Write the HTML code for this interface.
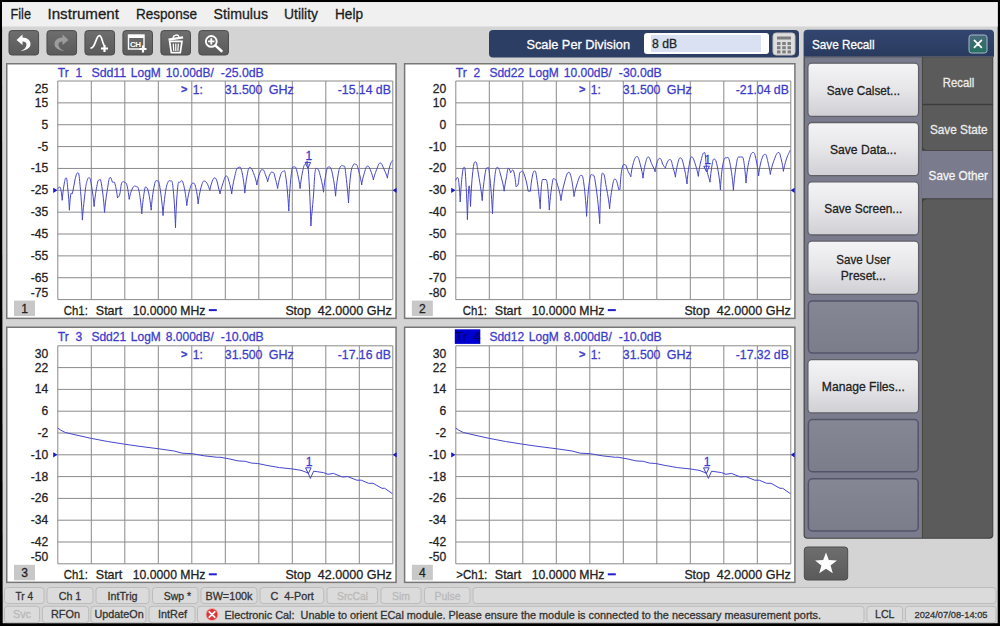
<!DOCTYPE html>
<html><head><meta charset="utf-8"><title>Network Analyzer</title>
<style>html,body{margin:0;padding:0;background:#000;width:1000px;height:626px;overflow:hidden}</style></head>
<body>
<svg width="1000" height="626" viewBox="0 0 1000 626" font-family='"Liberation Sans", Arial, sans-serif' style="position:absolute;left:0;top:0">
<style>text{white-space:pre}</style>
<defs>
<linearGradient id="gbtn" x1="0" y1="0" x2="0" y2="1"><stop offset="0" stop-color="#f4f4f6"/><stop offset="0.5" stop-color="#e6e6e9"/><stop offset="1" stop-color="#cfcfd4"/></linearGradient>
<linearGradient id="gtb" x1="0" y1="0" x2="0" y2="1"><stop offset="0" stop-color="#6e6e6e"/><stop offset="1" stop-color="#5a5a5a"/></linearGradient>
<linearGradient id="ghd" x1="0" y1="0" x2="0" y2="1"><stop offset="0" stop-color="#33466f"/><stop offset="1" stop-color="#293a5e"/></linearGradient>
<linearGradient id="gcl" x1="0" y1="0" x2="0" y2="1"><stop offset="0" stop-color="#4a6a7c"/><stop offset="1" stop-color="#24705f"/></linearGradient>
<linearGradient id="gin" x1="0" y1="0" x2="0" y2="1"><stop offset="0" stop-color="#868795"/><stop offset="1" stop-color="#7c7d8b"/></linearGradient>
</defs>
<rect x="0" y="0" width="1000" height="626" fill="#000" />
<rect x="1.9" y="2.1" width="995.8" height="621.1" fill="#d4d4d4" />
<rect x="1.9" y="2.1" width="995.8" height="24.4" fill="#f0f0f0" />
<path d="M0,0H2.0L2.7,626H0Z" fill="#000"/>
<text x="10.5" y="19" font-size="15" fill="#1c1c1c" stroke="#1c1c1c" stroke-width="0.3" textLength="20.5" lengthAdjust="spacingAndGlyphs" >File</text>
<text x="47.5" y="19" font-size="15" fill="#1c1c1c" stroke="#1c1c1c" stroke-width="0.3" textLength="71.5" lengthAdjust="spacingAndGlyphs" >Instrument</text>
<text x="136" y="19" font-size="15" fill="#1c1c1c" stroke="#1c1c1c" stroke-width="0.3" textLength="61" lengthAdjust="spacingAndGlyphs" >Response</text>
<text x="213.6" y="19" font-size="15" fill="#1c1c1c" stroke="#1c1c1c" stroke-width="0.3" textLength="54.4" lengthAdjust="spacingAndGlyphs" >Stimulus</text>
<text x="284" y="19" font-size="15" fill="#1c1c1c" stroke="#1c1c1c" stroke-width="0.3" textLength="34" lengthAdjust="spacingAndGlyphs" >Utility</text>
<text x="335" y="19" font-size="15" fill="#1c1c1c" stroke="#1c1c1c" stroke-width="0.3" textLength="28" lengthAdjust="spacingAndGlyphs" >Help</text>
<rect x="9.0" y="30.6" width="29.6" height="24.4" fill="url(#gtb)" rx="3" stroke="#4c4c4c" stroke-width="1" />
<rect x="46.97" y="30.6" width="29.6" height="24.4" fill="url(#gtb)" rx="3" stroke="#4c4c4c" stroke-width="1" />
<rect x="84.94" y="30.6" width="29.6" height="24.4" fill="url(#gtb)" rx="3" stroke="#4c4c4c" stroke-width="1" />
<rect x="122.91" y="30.6" width="29.6" height="24.4" fill="url(#gtb)" rx="3" stroke="#4c4c4c" stroke-width="1" />
<rect x="160.88" y="30.6" width="29.6" height="24.4" fill="url(#gtb)" rx="3" stroke="#4c4c4c" stroke-width="1" />
<rect x="198.85" y="30.6" width="29.6" height="24.4" fill="url(#gtb)" rx="3" stroke="#4c4c4c" stroke-width="1" />
<g transform="translate(23.5,43)" fill="#fff" stroke="none"><path d="M-7,-3 L-1,-8.5 L-1,-5.5 C4,-5.5 7,-2.5 7,1 C7,5 3,7.5 -3,8 C1,6.5 3,4 3,1.5 C3,-0.5 1.5,-1.5 -1,-1.5 L-1,2 Z"/></g>
<g transform="translate(61.5,43) scale(-1,1)" fill="#9c9c9c" stroke="none"><path d="M-7,-3 L-1,-8.5 L-1,-5.5 C4,-5.5 7,-2.5 7,1 C7,5 3,7.5 -3,8 C1,6.5 3,4 3,1.5 C3,-0.5 1.5,-1.5 -1,-1.5 L-1,2 Z"/></g>
<g transform="translate(99.5,43)" fill="none" stroke="#fff" stroke-width="1.7" stroke-linecap="round"><path d="M-8.5,5 C-4,5 -3.6,-7.4 -0.2,-7.4 C2.6,-7.4 2.6,-0.5 4.3,1.6"/><path d="M5,2 L5,9 M1.5,5.5 L8.5,5.5" stroke-width="2.2" stroke-linecap="butt"/></g>
<g transform="translate(137.5,43)"><rect x="-9" y="-8" width="15.5" height="14" fill="none" stroke="#fff" stroke-width="1.4"/><rect x="-9" y="-8" width="15.5" height="3" fill="#fff"/><text x="-7.5" y="3.5" font-size="8" font-weight="bold" fill="#fff" textLength="11">CH</text><path d="M5.5,2.5 L5.5,9.5 M2,6 L9,6" stroke="#fff" stroke-width="2.2"/></g>
<g transform="translate(175.8,43.6) scale(1.12)" fill="none" stroke="#fff"><path d="M-5.5,-2 L-4,8 L4,8 L5.5,-2 Z" stroke-width="1.5"/><path d="M-6.5,-3.5 L6.5,-5.5" stroke-width="2"/><path d="M-2.5,-5 C-2,-8 2,-8.5 2.8,-6" stroke-width="1.3"/><path d="M-2.3,0 L-1.8,6.5 M0,0 L0,6.5 M2.3,0 L1.8,6.5" stroke-width="1.1"/></g>
<g transform="translate(213.5,43)" fill="none" stroke="#fff"><circle cx="-2.2" cy="-1.6" r="5.4" stroke-width="1.9"/><path d="M2,2.6 L8,8" stroke-width="2.6" stroke-linecap="round"/><path d="M-2.2,-4.8 L-2.2,1.6 M-5.4,-1.6 L1,-1.6" stroke-width="1.9"/></g>
<rect x="489" y="30" width="310" height="27.6" fill="#2d3e65" rx="4" />
<text x="526.4" y="49" font-size="13.5" fill="#fff" stroke="#fff" stroke-width="0.3" textLength="103.6" lengthAdjust="spacingAndGlyphs" >Scale Per Division</text>
<rect x="644" y="33" width="125" height="21" fill="#fff" rx="3" />
<rect x="651" y="35" width="110" height="17" fill="#d9e1f2" />
<text x="652" y="48.2" font-size="13" fill="#222" stroke="#222" stroke-width="0.3" textLength="25" lengthAdjust="spacingAndGlyphs" >8 dB</text>
<rect x="773" y="33" width="22" height="22" fill="#dedede" rx="3" stroke="#bdbdbd" stroke-width="1" />
<g fill="#7e7e7e"><rect x="777" y="36.5" width="14" height="3"/><rect x="777.0" y="42.0" width="3.5" height="3"/><rect x="782.25" y="42.0" width="3.5" height="3"/><rect x="787.5" y="42.0" width="3.5" height="3"/><rect x="777.0" y="46.2" width="3.5" height="3"/><rect x="782.25" y="46.2" width="3.5" height="3"/><rect x="787.5" y="46.2" width="3.5" height="3"/><rect x="777.0" y="50.4" width="3.5" height="3"/><rect x="782.25" y="50.4" width="3.5" height="3"/><rect x="787.5" y="50.4" width="3.5" height="3"/></g>
<rect x="6" y="63" width="390.8" height="256.1" fill="#777" />
<rect x="7.5" y="64.5" width="387.8" height="253.10000000000002" fill="#fff" />
<path d="M57.80,81V299.6M57.8,81.00H392.8M91.30,81V299.6M57.8,102.86H392.8M124.80,81V299.6M57.8,124.72H392.8M158.30,81V299.6M57.8,146.58H392.8M191.80,81V299.6M57.8,168.44H392.8M225.30,81V299.6M57.8,190.30H392.8M258.80,81V299.6M57.8,212.16H392.8M292.30,81V299.6M57.8,234.02H392.8M325.80,81V299.6M57.8,255.88H392.8M359.30,81V299.6M57.8,277.74H392.8M392.80,81V299.6M57.8,299.60H392.8" stroke="#8a8a8a" stroke-width="1" fill="none"/>
<text x="48.3" y="92.7" font-size="13" fill="#222" stroke="#222" stroke-width="0.3" text-anchor="end" textLength="13.45" lengthAdjust="spacingAndGlyphs" >25</text>
<text x="48.3" y="106.9" font-size="13" fill="#222" stroke="#222" stroke-width="0.3" text-anchor="end" textLength="13.45" lengthAdjust="spacingAndGlyphs" >15</text>
<text x="48.3" y="128.7" font-size="13" fill="#222" stroke="#222" stroke-width="0.3" text-anchor="end" textLength="6.72" lengthAdjust="spacingAndGlyphs" >5</text>
<text x="48.3" y="150.6" font-size="13" fill="#222" stroke="#222" stroke-width="0.3" text-anchor="end" textLength="10.75" lengthAdjust="spacingAndGlyphs" >-5</text>
<text x="48.3" y="172.4" font-size="13" fill="#222" stroke="#222" stroke-width="0.3" text-anchor="end" textLength="17.47" lengthAdjust="spacingAndGlyphs" >-15</text>
<text x="48.3" y="194.3" font-size="13" fill="#222" stroke="#222" stroke-width="0.3" text-anchor="end" textLength="17.47" lengthAdjust="spacingAndGlyphs" >-25</text>
<text x="48.3" y="216.2" font-size="13" fill="#222" stroke="#222" stroke-width="0.3" text-anchor="end" textLength="17.47" lengthAdjust="spacingAndGlyphs" >-35</text>
<text x="48.3" y="238.0" font-size="13" fill="#222" stroke="#222" stroke-width="0.3" text-anchor="end" textLength="17.47" lengthAdjust="spacingAndGlyphs" >-45</text>
<text x="48.3" y="259.9" font-size="13" fill="#222" stroke="#222" stroke-width="0.3" text-anchor="end" textLength="17.47" lengthAdjust="spacingAndGlyphs" >-55</text>
<text x="48.3" y="281.7" font-size="13" fill="#222" stroke="#222" stroke-width="0.3" text-anchor="end" textLength="17.47" lengthAdjust="spacingAndGlyphs" >-65</text>
<text x="48.3" y="297.2" font-size="13" fill="#222" stroke="#222" stroke-width="0.3" text-anchor="end" textLength="17.47" lengthAdjust="spacingAndGlyphs" >-75</text>
<text x="57.8" y="77" font-size="13" fill="#3c3ccc" stroke="#3c3ccc" stroke-width="0.3" textLength="10.96" lengthAdjust="spacingAndGlyphs" >Tr</text>
<text x="75.6" y="77" font-size="13" fill="#3c3ccc" stroke="#3c3ccc" stroke-width="0.3" textLength="6.72" lengthAdjust="spacingAndGlyphs" >1</text>
<text x="91.39999999999999" y="77" font-size="13" fill="#3c3ccc" stroke="#3c3ccc" stroke-width="0.3" textLength="34.8" lengthAdjust="spacingAndGlyphs" >Sdd11</text>
<text x="130.8" y="77" font-size="13" fill="#3c3ccc" stroke="#3c3ccc" stroke-width="0.3" textLength="30" lengthAdjust="spacingAndGlyphs" >LogM</text>
<text x="165.8" y="77" font-size="13" fill="#3c3ccc" stroke="#3c3ccc" stroke-width="0.3" textLength="48" lengthAdjust="spacingAndGlyphs" >10.00dB/</text>
<text x="220.8" y="77" font-size="13" fill="#3c3ccc" stroke="#3c3ccc" stroke-width="0.3" textLength="43" lengthAdjust="spacingAndGlyphs" >-25.0dB</text>
<text x="181.10000000000002" y="93.4" font-size="11" fill="#3c3ccc" stroke="#3c3ccc" stroke-width="0.3" font-weight="bold">&gt;</text>
<text x="192.8" y="94" font-size="13" fill="#3c3ccc" stroke="#3c3ccc" stroke-width="0.3" textLength="10.08" lengthAdjust="spacingAndGlyphs" >1:</text>
<text x="224.8" y="94" font-size="13" fill="#3c3ccc" stroke="#3c3ccc" stroke-width="0.3" textLength="37.6" lengthAdjust="spacingAndGlyphs" >31.500</text>
<text x="268.8" y="94" font-size="13" fill="#3c3ccc" stroke="#3c3ccc" stroke-width="0.3" textLength="25" lengthAdjust="spacingAndGlyphs" >GHz</text>
<text x="390.8" y="94" font-size="13" fill="#3c3ccc" stroke="#3c3ccc" stroke-width="0.3" text-anchor="end" textLength="53" lengthAdjust="spacingAndGlyphs" >-15.14 dB</text>
<path d="M57.6,189.0C57.8,188.5 58.5,187.2 59.4,187.2C60.0,187.2 60.2,186.5 60.8,189.5C61.4,192.5 62.1,197.6 62.2,200.3C62.5,196.5 63.2,189.6 64.0,185.0C65.0,179.5 65.2,177.8 66.2,177.8C66.8,177.8 67.0,180.3 67.6,186.8C68.5,194.9 69.2,204.3 69.4,210.2C69.6,206.4 70.1,198.1 70.7,194.9C71.5,190.4 71.7,196.0 72.5,193.1C73.7,188.7 74.0,183.2 75.2,178.7C76.4,174.2 76.7,172.9 77.9,172.9C78.7,172.9 78.9,172.9 79.7,181.4C80.9,194.1 82.1,210.4 82.4,220.1C82.7,213.1 83.9,202.6 85.1,192.2C85.9,185.2 86.1,184.2 86.9,181.4C88.0,177.7 88.2,177.8 89.2,177.8C90.2,177.8 90.4,179.2 91.4,185.0C92.6,192.2 93.8,201.2 94.1,206.6C94.4,202.1 95.4,194.4 96.4,188.6C97.6,182.4 97.8,180.0 99.0,180.0C100.0,180.0 100.2,177.1 101.3,183.2C102.8,191.7 104.2,205.1 104.5,212.4C104.9,206.9 106.0,197.8 107.2,190.4C108.6,182.1 108.9,177.4 110.3,177.4C111.4,177.4 111.6,181.0 112.6,182.3C113.6,183.5 113.8,180.1 114.8,183.2C116.0,187.1 117.2,194.3 117.5,198.0C117.8,197.0 118.8,197.8 119.8,194.0C120.7,191.1 120.8,184.8 121.6,183.2C123.4,179.7 123.8,182.7 125.6,182.7C127.2,182.7 128.8,195.2 129.2,199.4C129.6,196.5 131.2,190.2 132.8,187.7C134.8,184.6 135.3,186.8 137.3,186.8C139.3,186.8 141.3,207.1 141.8,213.8C142.1,208.0 143.3,197.6 144.5,190.4C145.3,185.6 145.5,187.2 146.3,187.2C148.5,187.2 150.6,204.4 151.2,210.2C151.5,203.9 152.9,191.6 154.4,185.0C155.9,178.4 156.2,181.0 157.6,181.0C158.6,181.0 158.8,180.6 159.8,186.8C161.3,196.1 162.7,208.4 163.0,215.6C163.3,210.2 164.2,200.7 165.2,194.0C166.4,185.7 166.7,185.2 167.9,182.3C169.1,179.4 169.4,181.0 170.6,181.0C171.8,181.0 172.1,178.7 173.3,190.4C174.3,199.7 175.2,218.3 175.5,227.7C175.7,218.3 176.5,200.2 177.4,190.4C178.4,179.8 178.6,182.3 179.6,182.3C181.2,182.3 181.6,177.9 183.2,183.2C184.8,188.5 186.4,200.1 186.8,205.7C187.1,201.9 188.3,194.7 189.5,190.4C191.1,184.6 191.5,183.2 193.1,183.2C194.3,183.2 194.6,182.7 195.8,187.7C196.9,192.0 197.9,199.8 198.1,203.9C198.5,199.6 199.8,191.8 201.2,186.8C202.7,181.5 203.0,181.0 204.4,181.0C206.9,181.0 209.2,188.1 209.8,190.4C210.4,187.2 212.5,177.8 214.7,177.8C217.1,177.8 217.7,186.2 220.1,193.6C220.1,193.5 220.0,193.9 220.0,194.0C220.3,191.5 221.5,187.6 222.7,184.1C224.3,179.5 224.7,176.0 226.3,176.0C227.5,176.0 227.8,177.3 229.0,181.4C230.2,185.5 231.4,190.8 231.7,194.0C232.0,189.9 233.2,182.8 234.4,177.8C236.0,171.1 236.4,167.9 238.0,167.9C239.6,167.9 240.0,164.6 241.6,170.6C243.1,176.0 244.5,187.5 244.8,193.1C245.1,188.8 246.0,181.1 247.0,176.0C248.2,169.6 248.5,167.5 249.7,167.5C251.3,167.5 251.7,168.5 253.3,172.4C254.9,176.3 256.5,181.8 256.9,185.0C257.2,182.1 258.4,176.4 259.6,173.3C261.1,169.5 261.4,169.7 262.8,169.7C264.2,169.7 264.5,172.6 265.9,176.0C266.7,178.0 267.5,180.3 267.7,181.8C268.0,179.6 269.2,175.4 270.4,173.3C271.6,171.2 271.9,172.4 273.1,172.4C274.3,172.4 274.6,176.1 275.8,180.5C276.6,183.4 277.4,186.6 277.6,188.6C277.9,185.4 279.1,179.8 280.3,176.0C281.5,172.2 281.8,171.5 283.0,171.5C284.2,171.5 284.5,167.6 285.7,176.0C287.1,185.5 288.4,202.3 288.8,211.1C289.0,202.3 290.0,185.2 291.1,176.0C292.3,165.4 292.6,167.0 293.8,167.0C295.0,167.0 295.3,165.5 296.5,169.7C298.1,175.3 299.7,183.9 300.1,188.6C300.4,184.1 301.6,176.1 302.8,170.6C304.0,165.1 304.3,164.3 305.5,164.3C306.7,164.3 307.0,154.9 308.2,168.8C309.4,182.7 310.6,211.7 310.9,226.0C311.2,218.0 312.4,209.7 313.6,194.0C314.2,185.6 314.4,176.9 315.0,172.4C316.0,165.6 316.2,168.8 317.2,168.8C318.8,168.8 319.2,171.8 320.8,177.8C322.0,182.3 323.2,188.6 323.5,192.2C323.8,187.2 325.0,178.1 326.2,172.4C327.4,166.7 327.7,167.0 328.9,167.0C330.5,167.0 330.9,167.1 332.5,174.2C333.9,180.2 335.2,190.7 335.6,196.2C335.8,191.1 336.8,182.6 337.9,176.0C339.0,169.4 339.2,168.7 340.2,167.0C342.0,164.2 342.4,166.1 344.2,166.1C345.0,166.1 345.2,169.1 346.0,176.0C347.1,185.7 348.2,196.2 348.5,203.0C348.8,196.2 349.6,183.2 350.5,176.0C351.7,166.2 352.0,167.8 353.2,165.2C354.4,162.6 354.7,164.3 355.9,164.3C357.1,164.3 357.4,166.2 358.6,170.6C360.0,175.5 361.3,181.4 361.7,185.0C361.9,182.3 362.9,177.6 364.0,174.2C365.6,169.0 366.0,166.1 367.6,166.1C368.8,166.1 369.1,166.8 370.3,169.7C371.7,173.0 373.0,177.4 373.4,180.0C373.7,177.4 375.1,173.3 376.6,169.7C378.2,165.7 378.6,163.0 380.2,163.0C381.8,163.0 382.2,165.4 383.8,168.8C385.4,172.2 387.0,175.8 387.4,178.2C387.7,174.9 388.9,169.5 390.1,165.2C391.2,161.4 392.2,161.4 392.4,160.2" stroke="#4646cc" stroke-width="1" fill="none" stroke-linejoin="round"/>
<path d="M53.199999999999996,187.70000000000002L57.599999999999994,190.3L53.199999999999996,192.9Z M396.6,187.70000000000002L392.6,190.3L396.6,192.9Z" fill="#1a1ac0"/>
<path d="M305.09999999999997,162.39999999999998L310.7,162.39999999999998L307.9,168.2Z" fill="none" stroke="#3c3ccc" stroke-width="1"/>
<text x="308.79999999999995" y="160.29999999999998" font-size="13" fill="#3c3ccc" stroke="#3c3ccc" stroke-width="0.3" text-anchor="middle" textLength="6.72" lengthAdjust="spacingAndGlyphs" >1</text>
<rect x="14" y="300.6" width="21" height="15.5" fill="#c8c8c8" />
<text x="24.5" y="312.90000000000003" font-size="13" fill="#222" stroke="#222" stroke-width="0.3" text-anchor="middle" textLength="6.72" lengthAdjust="spacingAndGlyphs" >1</text>
<text x="63.8" y="315.1" font-size="13" fill="#222" stroke="#222" stroke-width="0.3" textLength="24" lengthAdjust="spacingAndGlyphs" >Ch1:</text>
<text x="95.8" y="315.1" font-size="13" fill="#222" stroke="#222" stroke-width="0.3" textLength="26.4" lengthAdjust="spacingAndGlyphs" >Start</text>
<text x="132.8" y="315.1" font-size="13" fill="#222" stroke="#222" stroke-width="0.3" textLength="72.6" lengthAdjust="spacingAndGlyphs" >10.0000 MHz</text>
<rect x="208.8" y="309.1" width="8" height="2" fill="#2020d0" />
<text x="285.40000000000003" y="315.1" font-size="13" fill="#222" stroke="#222" stroke-width="0.3" textLength="25.4" lengthAdjust="spacingAndGlyphs" >Stop</text>
<text x="317.8" y="315.1" font-size="13" fill="#222" stroke="#222" stroke-width="0.3" textLength="74" lengthAdjust="spacingAndGlyphs" >42.0000 GHz</text>
<rect x="403.85" y="63" width="391.8" height="256.1" fill="#777" />
<rect x="405.35" y="64.5" width="388.8" height="253.10000000000002" fill="#fff" />
<path d="M455.80,81V299.6M455.8,81.00H790.8M489.30,81V299.6M455.8,102.86H790.8M522.80,81V299.6M455.8,124.72H790.8M556.30,81V299.6M455.8,146.58H790.8M589.80,81V299.6M455.8,168.44H790.8M623.30,81V299.6M455.8,190.30H790.8M656.80,81V299.6M455.8,212.16H790.8M690.30,81V299.6M455.8,234.02H790.8M723.80,81V299.6M455.8,255.88H790.8M757.30,81V299.6M455.8,277.74H790.8M790.80,81V299.6M455.8,299.60H790.8" stroke="#8a8a8a" stroke-width="1" fill="none"/>
<text x="446.3" y="92.7" font-size="13" fill="#222" stroke="#222" stroke-width="0.3" text-anchor="end" textLength="13.45" lengthAdjust="spacingAndGlyphs" >20</text>
<text x="446.3" y="106.9" font-size="13" fill="#222" stroke="#222" stroke-width="0.3" text-anchor="end" textLength="13.45" lengthAdjust="spacingAndGlyphs" >10</text>
<text x="446.3" y="128.7" font-size="13" fill="#222" stroke="#222" stroke-width="0.3" text-anchor="end" textLength="6.72" lengthAdjust="spacingAndGlyphs" >0</text>
<text x="446.3" y="150.6" font-size="13" fill="#222" stroke="#222" stroke-width="0.3" text-anchor="end" textLength="17.47" lengthAdjust="spacingAndGlyphs" >-10</text>
<text x="446.3" y="172.4" font-size="13" fill="#222" stroke="#222" stroke-width="0.3" text-anchor="end" textLength="17.47" lengthAdjust="spacingAndGlyphs" >-20</text>
<text x="446.3" y="194.3" font-size="13" fill="#222" stroke="#222" stroke-width="0.3" text-anchor="end" textLength="17.47" lengthAdjust="spacingAndGlyphs" >-30</text>
<text x="446.3" y="216.2" font-size="13" fill="#222" stroke="#222" stroke-width="0.3" text-anchor="end" textLength="17.47" lengthAdjust="spacingAndGlyphs" >-40</text>
<text x="446.3" y="238.0" font-size="13" fill="#222" stroke="#222" stroke-width="0.3" text-anchor="end" textLength="17.47" lengthAdjust="spacingAndGlyphs" >-50</text>
<text x="446.3" y="259.9" font-size="13" fill="#222" stroke="#222" stroke-width="0.3" text-anchor="end" textLength="17.47" lengthAdjust="spacingAndGlyphs" >-60</text>
<text x="446.3" y="281.7" font-size="13" fill="#222" stroke="#222" stroke-width="0.3" text-anchor="end" textLength="17.47" lengthAdjust="spacingAndGlyphs" >-70</text>
<text x="446.3" y="297.2" font-size="13" fill="#222" stroke="#222" stroke-width="0.3" text-anchor="end" textLength="17.47" lengthAdjust="spacingAndGlyphs" >-80</text>
<text x="455.8" y="77" font-size="13" fill="#3c3ccc" stroke="#3c3ccc" stroke-width="0.3" textLength="10.96" lengthAdjust="spacingAndGlyphs" >Tr</text>
<text x="473.6" y="77" font-size="13" fill="#3c3ccc" stroke="#3c3ccc" stroke-width="0.3" textLength="6.72" lengthAdjust="spacingAndGlyphs" >2</text>
<text x="489.4" y="77" font-size="13" fill="#3c3ccc" stroke="#3c3ccc" stroke-width="0.3" textLength="34.8" lengthAdjust="spacingAndGlyphs" >Sdd22</text>
<text x="528.8" y="77" font-size="13" fill="#3c3ccc" stroke="#3c3ccc" stroke-width="0.3" textLength="30" lengthAdjust="spacingAndGlyphs" >LogM</text>
<text x="563.8" y="77" font-size="13" fill="#3c3ccc" stroke="#3c3ccc" stroke-width="0.3" textLength="48" lengthAdjust="spacingAndGlyphs" >10.00dB/</text>
<text x="618.8" y="77" font-size="13" fill="#3c3ccc" stroke="#3c3ccc" stroke-width="0.3" textLength="43" lengthAdjust="spacingAndGlyphs" >-30.0dB</text>
<text x="579.1" y="93.4" font-size="11" fill="#3c3ccc" stroke="#3c3ccc" stroke-width="0.3" font-weight="bold">&gt;</text>
<text x="590.8" y="94" font-size="13" fill="#3c3ccc" stroke="#3c3ccc" stroke-width="0.3" textLength="10.08" lengthAdjust="spacingAndGlyphs" >1:</text>
<text x="622.8" y="94" font-size="13" fill="#3c3ccc" stroke="#3c3ccc" stroke-width="0.3" textLength="37.6" lengthAdjust="spacingAndGlyphs" >31.500</text>
<text x="666.8" y="94" font-size="13" fill="#3c3ccc" stroke="#3c3ccc" stroke-width="0.3" textLength="25" lengthAdjust="spacingAndGlyphs" >GHz</text>
<text x="788.8" y="94" font-size="13" fill="#3c3ccc" stroke="#3c3ccc" stroke-width="0.3" text-anchor="end" textLength="53" lengthAdjust="spacingAndGlyphs" >-21.04 dB</text>
<path d="M455.6,180.4C455.8,179.7 456.6,177.7 457.4,177.7C458.0,177.7 458.2,176.7 458.8,182.2C459.4,187.7 460.1,197.1 460.2,202.0C460.5,195.7 461.2,183.9 462.0,176.8C463.0,168.3 463.2,167.4 464.2,167.4C464.8,167.4 465.0,166.4 465.6,176.8C466.4,189.9 467.2,208.9 467.4,219.6C467.7,211.2 468.4,185.8 469.2,185.8C469.8,185.8 470.3,201.3 470.5,206.5C470.8,197.7 471.8,180.1 472.8,171.4C474.2,160.1 474.5,162.0 475.9,162.0C476.7,162.0 476.9,164.6 477.7,169.6C479.7,182.0 481.7,192.8 482.2,200.6C482.5,194.2 483.7,182.9 484.9,175.0C486.0,168.2 486.2,167.8 487.2,167.8C488.2,167.8 488.4,164.7 489.4,173.2C490.8,185.3 492.1,203.6 492.5,213.7C492.7,205.4 493.5,188.6 494.4,180.4C495.8,167.8 496.1,167.4 497.5,167.4C498.7,167.4 499.0,168.9 500.2,173.2C502.0,179.6 503.7,186.7 504.2,191.2C504.4,187.6 505.4,182.6 506.5,176.8C507.3,172.3 507.5,168.3 508.3,168.3C509.4,168.3 510.4,171.7 510.6,172.8C510.9,172.1 511.8,170.0 512.8,170.0C514.3,170.0 515.7,182.5 516.0,186.7C516.3,186.0 517.2,187.5 518.2,184.0C519.0,181.1 519.2,172.3 520.0,172.3C521.6,172.3 522.0,168.9 523.6,172.7C525.6,177.4 527.6,186.6 528.1,191.2C528.4,191.2 530.2,191.2 530.4,191.2C530.7,187.1 531.6,179.5 532.6,175.0C533.6,170.5 533.8,171.0 534.8,171.0C535.8,171.0 536.0,173.0 537.1,180.4C538.5,190.0 539.8,201.7 540.2,208.8C540.4,201.5 541.4,179.5 542.5,179.5C544.1,179.5 544.5,179.5 546.1,179.5C547.6,179.5 549.0,202.5 549.3,210.1C549.7,203.1 551.0,190.4 552.4,182.2C553.4,176.4 553.6,179.0 554.6,179.0C556.0,179.0 556.3,180.9 557.8,185.8C559.3,190.7 560.7,196.9 561.0,200.6C561.4,196.4 562.7,188.9 564.1,184.0C566.3,176.2 566.8,172.3 569.0,172.3C571.2,172.3 573.4,190.5 574.0,196.6C574.4,193.0 576.0,187.0 577.6,182.2C579.2,177.4 579.6,175.4 581.2,175.4C582.4,175.4 582.7,174.8 583.9,184.0C585.1,193.2 586.3,208.3 586.6,216.4C586.9,207.8 588.1,190.7 589.3,182.2C590.8,172.0 591.1,175.0 592.5,175.0C593.9,175.0 594.2,174.7 595.6,184.0C597.5,196.6 599.2,213.7 599.7,223.6C599.9,213.7 600.4,192.3 601.0,184.0C602.0,169.8 602.2,173.6 603.2,173.6C604.6,173.6 604.9,179.7 606.4,187.6C607.9,195.5 609.3,203.5 609.6,208.8C609.9,203.5 611.0,193.9 612.2,187.6C613.5,180.4 613.7,179.0 615.0,179.0C616.7,179.0 618.2,186.8 618.6,189.4C618.8,189.4 619.8,189.4 620.0,189.4C620.2,184.4 621.0,173.6 621.8,169.6C623.3,162.5 623.6,164.7 625.0,164.7C626.4,164.7 626.7,168.5 628.1,171.4C629.3,173.9 630.5,175.5 630.8,176.8C631.1,173.2 632.3,166.3 633.5,162.4C635.1,157.2 635.5,156.6 637.1,156.6C638.5,156.6 638.8,159.2 640.2,164.2C641.5,168.9 642.7,174.7 643.0,178.2C643.3,174.7 644.2,168.0 645.2,164.2C646.7,158.5 647.0,157.0 648.4,157.0C649.8,157.0 650.1,160.2 651.5,163.3C653.1,166.9 654.7,169.6 655.1,171.8C655.4,169.2 656.4,164.4 657.4,161.5C658.6,158.4 658.8,158.4 660.0,158.4C661.4,158.4 661.7,162.5 663.2,165.1C664.2,166.8 665.1,167.4 665.4,168.2C665.7,166.3 666.9,162.8 668.2,160.6C669.2,159.0 669.4,159.7 670.4,159.7C671.6,159.7 671.9,163.6 673.1,167.8C674.2,171.4 675.2,174.8 675.4,177.2C675.7,173.9 676.6,168.1 677.6,164.2C678.8,159.4 679.1,157.9 680.3,157.9C681.7,157.9 682.0,158.8 683.4,164.2C685.0,170.5 686.5,179.1 687.0,184.0C687.2,179.1 688.2,170.3 689.3,164.2C690.4,158.1 690.6,157.0 691.6,157.0C693.0,157.0 693.3,158.4 694.7,162.4C696.3,167.1 697.9,172.9 698.3,176.4C698.6,172.5 699.8,165.2 701.0,160.6C702.6,154.4 703.0,152.5 704.6,152.5C705.6,152.5 705.8,164.3 706.8,169.6C708.2,177.6 709.6,179.0 710.0,182.2C710.3,177.7 711.2,169.9 712.2,164.2C713.0,159.5 713.1,159.2 714.0,159.2C715.4,159.2 715.7,159.1 717.2,166.0C718.7,172.9 720.1,183.8 720.4,189.8C720.7,183.8 721.6,171.4 722.6,166.0C724.2,157.0 724.6,157.9 726.2,157.9C727.8,157.9 728.2,155.1 729.8,162.4C731.4,169.7 733.0,183.3 733.4,190.3C733.7,184.2 734.9,173.5 736.1,166.0C737.3,158.5 737.6,157.0 738.8,157.0C740.4,157.0 740.8,157.0 742.4,157.0C744.0,157.0 745.6,176.6 746.0,183.1C746.3,177.9 747.5,167.6 748.7,162.4C750.7,153.8 751.2,152.5 753.2,152.5C754.4,152.5 754.7,153.5 755.9,158.8C757.1,164.1 758.3,171.6 758.6,175.9C758.9,172.1 760.1,164.4 761.3,160.6C763.2,154.7 763.6,154.3 765.4,154.3C766.4,154.3 766.6,156.6 767.6,160.6C768.8,165.6 770.0,171.0 770.3,174.5C770.7,171.0 772.3,164.8 773.9,160.6C776.1,154.9 776.6,152.5 778.8,152.5C779.8,152.5 780.0,154.5 781.1,158.8C782.2,163.1 783.2,168.2 783.4,171.4C783.8,168.2 785.1,163.2 786.5,158.8C788.1,153.6 789.7,152.3 790.1,150.2" stroke="#4646cc" stroke-width="1" fill="none" stroke-linejoin="round"/>
<path d="M451.2,187.70000000000002L455.6,190.3L451.2,192.9Z M794.5999999999999,187.70000000000002L790.5999999999999,190.3L794.5999999999999,192.9Z" fill="#1a1ac0"/>
<path d="M703.8000000000001,166.2L709.4,166.2L706.6,172Z" fill="none" stroke="#3c3ccc" stroke-width="1"/>
<text x="707.5" y="164.1" font-size="13" fill="#3c3ccc" stroke="#3c3ccc" stroke-width="0.3" text-anchor="middle" textLength="6.72" lengthAdjust="spacingAndGlyphs" >1</text>
<rect x="411.85" y="300.6" width="21" height="15.5" fill="#c8c8c8" />
<text x="422.35" y="312.90000000000003" font-size="13" fill="#222" stroke="#222" stroke-width="0.3" text-anchor="middle" textLength="6.72" lengthAdjust="spacingAndGlyphs" >2</text>
<text x="462.8" y="315.1" font-size="13" fill="#222" stroke="#222" stroke-width="0.3" textLength="24" lengthAdjust="spacingAndGlyphs" >Ch1:</text>
<text x="494.8" y="315.1" font-size="13" fill="#222" stroke="#222" stroke-width="0.3" textLength="26.4" lengthAdjust="spacingAndGlyphs" >Start</text>
<text x="531.8" y="315.1" font-size="13" fill="#222" stroke="#222" stroke-width="0.3" textLength="72.6" lengthAdjust="spacingAndGlyphs" >10.0000 MHz</text>
<rect x="607.8" y="309.1" width="8" height="2" fill="#2020d0" />
<text x="684.4000000000001" y="315.1" font-size="13" fill="#222" stroke="#222" stroke-width="0.3" textLength="25.4" lengthAdjust="spacingAndGlyphs" >Stop</text>
<text x="716.8" y="315.1" font-size="13" fill="#222" stroke="#222" stroke-width="0.3" textLength="74" lengthAdjust="spacingAndGlyphs" >42.0000 GHz</text>
<rect x="6" y="326.5" width="390.8" height="256.6" fill="#777" />
<rect x="7.5" y="328.0" width="387.8" height="253.60000000000002" fill="#fff" />
<path d="M57.80,345.8V563.8M57.8,345.80H392.8M91.30,345.8V563.8M57.8,367.60H392.8M124.80,345.8V563.8M57.8,389.40H392.8M158.30,345.8V563.8M57.8,411.20H392.8M191.80,345.8V563.8M57.8,433.00H392.8M225.30,345.8V563.8M57.8,454.80H392.8M258.80,345.8V563.8M57.8,476.60H392.8M292.30,345.8V563.8M57.8,498.40H392.8M325.80,345.8V563.8M57.8,520.20H392.8M359.30,345.8V563.8M57.8,542.00H392.8M392.80,345.8V563.8M57.8,563.80H392.8" stroke="#8a8a8a" stroke-width="1" fill="none"/>
<text x="48.3" y="357.5" font-size="13" fill="#222" stroke="#222" stroke-width="0.3" text-anchor="end" textLength="13.45" lengthAdjust="spacingAndGlyphs" >30</text>
<text x="48.3" y="371.6" font-size="13" fill="#222" stroke="#222" stroke-width="0.3" text-anchor="end" textLength="13.45" lengthAdjust="spacingAndGlyphs" >22</text>
<text x="48.3" y="393.4" font-size="13" fill="#222" stroke="#222" stroke-width="0.3" text-anchor="end" textLength="13.45" lengthAdjust="spacingAndGlyphs" >14</text>
<text x="48.3" y="415.2" font-size="13" fill="#222" stroke="#222" stroke-width="0.3" text-anchor="end" textLength="6.72" lengthAdjust="spacingAndGlyphs" >6</text>
<text x="48.3" y="437.0" font-size="13" fill="#222" stroke="#222" stroke-width="0.3" text-anchor="end" textLength="10.75" lengthAdjust="spacingAndGlyphs" >-2</text>
<text x="48.3" y="458.8" font-size="13" fill="#222" stroke="#222" stroke-width="0.3" text-anchor="end" textLength="17.47" lengthAdjust="spacingAndGlyphs" >-10</text>
<text x="48.3" y="480.6" font-size="13" fill="#222" stroke="#222" stroke-width="0.3" text-anchor="end" textLength="17.47" lengthAdjust="spacingAndGlyphs" >-18</text>
<text x="48.3" y="502.4" font-size="13" fill="#222" stroke="#222" stroke-width="0.3" text-anchor="end" textLength="17.47" lengthAdjust="spacingAndGlyphs" >-26</text>
<text x="48.3" y="524.2" font-size="13" fill="#222" stroke="#222" stroke-width="0.3" text-anchor="end" textLength="17.47" lengthAdjust="spacingAndGlyphs" >-34</text>
<text x="48.3" y="546.0" font-size="13" fill="#222" stroke="#222" stroke-width="0.3" text-anchor="end" textLength="17.47" lengthAdjust="spacingAndGlyphs" >-42</text>
<text x="48.3" y="561.4" font-size="13" fill="#222" stroke="#222" stroke-width="0.3" text-anchor="end" textLength="17.47" lengthAdjust="spacingAndGlyphs" >-50</text>
<text x="57.8" y="341.1" font-size="13" fill="#3c3ccc" stroke="#3c3ccc" stroke-width="0.3" textLength="10.96" lengthAdjust="spacingAndGlyphs" >Tr</text>
<text x="75.6" y="341.1" font-size="13" fill="#3c3ccc" stroke="#3c3ccc" stroke-width="0.3" textLength="6.72" lengthAdjust="spacingAndGlyphs" >3</text>
<text x="91.39999999999999" y="341.1" font-size="13" fill="#3c3ccc" stroke="#3c3ccc" stroke-width="0.3" textLength="34.8" lengthAdjust="spacingAndGlyphs" >Sdd21</text>
<text x="130.8" y="341.1" font-size="13" fill="#3c3ccc" stroke="#3c3ccc" stroke-width="0.3" textLength="30" lengthAdjust="spacingAndGlyphs" >LogM</text>
<text x="165.8" y="341.1" font-size="13" fill="#3c3ccc" stroke="#3c3ccc" stroke-width="0.3" textLength="48" lengthAdjust="spacingAndGlyphs" >8.000dB/</text>
<text x="220.8" y="341.1" font-size="13" fill="#3c3ccc" stroke="#3c3ccc" stroke-width="0.3" textLength="43" lengthAdjust="spacingAndGlyphs" >-10.0dB</text>
<text x="181.10000000000002" y="358.2" font-size="11" fill="#3c3ccc" stroke="#3c3ccc" stroke-width="0.3" font-weight="bold">&gt;</text>
<text x="192.8" y="358.8" font-size="13" fill="#3c3ccc" stroke="#3c3ccc" stroke-width="0.3" textLength="10.08" lengthAdjust="spacingAndGlyphs" >1:</text>
<text x="224.8" y="358.8" font-size="13" fill="#3c3ccc" stroke="#3c3ccc" stroke-width="0.3" textLength="37.6" lengthAdjust="spacingAndGlyphs" >31.500</text>
<text x="268.8" y="358.8" font-size="13" fill="#3c3ccc" stroke="#3c3ccc" stroke-width="0.3" textLength="25" lengthAdjust="spacingAndGlyphs" >GHz</text>
<text x="390.8" y="358.8" font-size="13" fill="#3c3ccc" stroke="#3c3ccc" stroke-width="0.3" text-anchor="end" textLength="53" lengthAdjust="spacingAndGlyphs" >-17.16 dB</text>
<path d="M57.6,428.0 L60.8,430.2 L65.3,432.5 L77.0,435.2 L91.4,438.4 L107.6,441.5 L124.7,444.2 L140.0,446.4 L158.0,448.7 L174.2,451.0 L182.3,453.2 L192.2,453.7 L204.8,455.9 L217.4,457.3 L220.0,457.2 L229.9,459.0 L238.0,460.9 L245.2,461.3 L251.5,463.1 L257.8,463.5 L266.8,465.4 L279.4,467.6 L292.0,468.9 L301.0,470.3 L308.2,473.0 L310.4,478.4 L313.6,471.2 L323.5,472.6 L328.0,474.3 L333.4,473.4 L342.4,477.0 L347.8,476.6 L356.8,480.2 L361.3,480.2 L368.5,483.3 L373.0,483.3 L382.0,488.3 L384.7,488.3 L392.4,493.7" stroke="#4646cc" stroke-width="1" fill="none" stroke-linejoin="round"/>
<path d="M53.199999999999996,452.2L57.599999999999994,454.8L53.199999999999996,457.40000000000003Z M396.6,452.2L392.6,454.8L396.6,457.40000000000003Z" fill="#1a1ac0"/>
<path d="M305.5,467.8L311.1,467.8L308.3,473.6Z" fill="none" stroke="#3c3ccc" stroke-width="1"/>
<text x="309.2" y="465.70000000000005" font-size="13" fill="#3c3ccc" stroke="#3c3ccc" stroke-width="0.3" text-anchor="middle" textLength="6.72" lengthAdjust="spacingAndGlyphs" >1</text>
<rect x="14" y="564.8" width="21" height="15.5" fill="#c8c8c8" />
<text x="24.5" y="577.0999999999999" font-size="13" fill="#222" stroke="#222" stroke-width="0.3" text-anchor="middle" textLength="6.72" lengthAdjust="spacingAndGlyphs" >3</text>
<text x="63.8" y="579.3" font-size="13" fill="#222" stroke="#222" stroke-width="0.3" textLength="24" lengthAdjust="spacingAndGlyphs" >Ch1:</text>
<text x="95.8" y="579.3" font-size="13" fill="#222" stroke="#222" stroke-width="0.3" textLength="26.4" lengthAdjust="spacingAndGlyphs" >Start</text>
<text x="132.8" y="579.3" font-size="13" fill="#222" stroke="#222" stroke-width="0.3" textLength="72.6" lengthAdjust="spacingAndGlyphs" >10.0000 MHz</text>
<rect x="208.8" y="573.3" width="8" height="2" fill="#2020d0" />
<text x="285.40000000000003" y="579.3" font-size="13" fill="#222" stroke="#222" stroke-width="0.3" textLength="25.4" lengthAdjust="spacingAndGlyphs" >Stop</text>
<text x="317.8" y="579.3" font-size="13" fill="#222" stroke="#222" stroke-width="0.3" textLength="74" lengthAdjust="spacingAndGlyphs" >42.0000 GHz</text>
<rect x="403.85" y="326.5" width="391.8" height="256.6" fill="#777" />
<rect x="405.35" y="328.0" width="388.8" height="253.60000000000002" fill="#fff" />
<path d="M455.80,345.8V563.8M455.8,345.80H790.8M489.30,345.8V563.8M455.8,367.60H790.8M522.80,345.8V563.8M455.8,389.40H790.8M556.30,345.8V563.8M455.8,411.20H790.8M589.80,345.8V563.8M455.8,433.00H790.8M623.30,345.8V563.8M455.8,454.80H790.8M656.80,345.8V563.8M455.8,476.60H790.8M690.30,345.8V563.8M455.8,498.40H790.8M723.80,345.8V563.8M455.8,520.20H790.8M757.30,345.8V563.8M455.8,542.00H790.8M790.80,345.8V563.8M455.8,563.80H790.8" stroke="#8a8a8a" stroke-width="1" fill="none"/>
<text x="446.3" y="357.5" font-size="13" fill="#222" stroke="#222" stroke-width="0.3" text-anchor="end" textLength="13.45" lengthAdjust="spacingAndGlyphs" >30</text>
<text x="446.3" y="371.6" font-size="13" fill="#222" stroke="#222" stroke-width="0.3" text-anchor="end" textLength="13.45" lengthAdjust="spacingAndGlyphs" >22</text>
<text x="446.3" y="393.4" font-size="13" fill="#222" stroke="#222" stroke-width="0.3" text-anchor="end" textLength="13.45" lengthAdjust="spacingAndGlyphs" >14</text>
<text x="446.3" y="415.2" font-size="13" fill="#222" stroke="#222" stroke-width="0.3" text-anchor="end" textLength="6.72" lengthAdjust="spacingAndGlyphs" >6</text>
<text x="446.3" y="437.0" font-size="13" fill="#222" stroke="#222" stroke-width="0.3" text-anchor="end" textLength="10.75" lengthAdjust="spacingAndGlyphs" >-2</text>
<text x="446.3" y="458.8" font-size="13" fill="#222" stroke="#222" stroke-width="0.3" text-anchor="end" textLength="17.47" lengthAdjust="spacingAndGlyphs" >-10</text>
<text x="446.3" y="480.6" font-size="13" fill="#222" stroke="#222" stroke-width="0.3" text-anchor="end" textLength="17.47" lengthAdjust="spacingAndGlyphs" >-18</text>
<text x="446.3" y="502.4" font-size="13" fill="#222" stroke="#222" stroke-width="0.3" text-anchor="end" textLength="17.47" lengthAdjust="spacingAndGlyphs" >-26</text>
<text x="446.3" y="524.2" font-size="13" fill="#222" stroke="#222" stroke-width="0.3" text-anchor="end" textLength="17.47" lengthAdjust="spacingAndGlyphs" >-34</text>
<text x="446.3" y="546.0" font-size="13" fill="#222" stroke="#222" stroke-width="0.3" text-anchor="end" textLength="17.47" lengthAdjust="spacingAndGlyphs" >-42</text>
<text x="446.3" y="561.4" font-size="13" fill="#222" stroke="#222" stroke-width="0.3" text-anchor="end" textLength="17.47" lengthAdjust="spacingAndGlyphs" >-50</text>
<rect x="454.8" y="329.3" width="25.5" height="14.6" fill="#0000d2" />
<text x="455.8" y="341.1" font-size="13" fill="#00006a" stroke="#00006a" stroke-width="0.3" textLength="10.96" lengthAdjust="spacingAndGlyphs" >Tr</text>
<text x="473.6" y="341.1" font-size="13" fill="#00006a" stroke="#00006a" stroke-width="0.3" textLength="6.72" lengthAdjust="spacingAndGlyphs" >4</text>
<text x="489.4" y="341.1" font-size="13" fill="#3c3ccc" stroke="#3c3ccc" stroke-width="0.3" textLength="34.8" lengthAdjust="spacingAndGlyphs" >Sdd12</text>
<text x="528.8" y="341.1" font-size="13" fill="#3c3ccc" stroke="#3c3ccc" stroke-width="0.3" textLength="30" lengthAdjust="spacingAndGlyphs" >LogM</text>
<text x="563.8" y="341.1" font-size="13" fill="#3c3ccc" stroke="#3c3ccc" stroke-width="0.3" textLength="48" lengthAdjust="spacingAndGlyphs" >8.000dB/</text>
<text x="618.8" y="341.1" font-size="13" fill="#3c3ccc" stroke="#3c3ccc" stroke-width="0.3" textLength="43" lengthAdjust="spacingAndGlyphs" >-10.0dB</text>
<text x="579.1" y="358.2" font-size="11" fill="#3c3ccc" stroke="#3c3ccc" stroke-width="0.3" font-weight="bold">&gt;</text>
<text x="590.8" y="358.8" font-size="13" fill="#3c3ccc" stroke="#3c3ccc" stroke-width="0.3" textLength="10.08" lengthAdjust="spacingAndGlyphs" >1:</text>
<text x="622.8" y="358.8" font-size="13" fill="#3c3ccc" stroke="#3c3ccc" stroke-width="0.3" textLength="37.6" lengthAdjust="spacingAndGlyphs" >31.500</text>
<text x="666.8" y="358.8" font-size="13" fill="#3c3ccc" stroke="#3c3ccc" stroke-width="0.3" textLength="25" lengthAdjust="spacingAndGlyphs" >GHz</text>
<text x="788.8" y="358.8" font-size="13" fill="#3c3ccc" stroke="#3c3ccc" stroke-width="0.3" text-anchor="end" textLength="53" lengthAdjust="spacingAndGlyphs" >-17.32 dB</text>
<path d="M455.6,428.0 L458.8,430.2 L463.3,432.5 L475.0,435.2 L489.4,438.4 L505.6,441.5 L522.7,444.2 L538.0,446.4 L556.0,448.7 L572.2,451.0 L580.3,453.2 L590.2,453.7 L602.8,455.9 L615.4,457.3 L618.0,457.2 L627.9,459.0 L636.0,460.9 L643.2,461.3 L649.5,463.1 L655.8,463.5 L664.8,465.4 L677.4,467.6 L690.0,468.9 L699.0,470.3 L706.2,473.0 L708.4,478.4 L711.6,471.2 L721.5,472.6 L726.0,474.3 L731.4,473.4 L740.4,477.0 L745.8,476.6 L754.8,480.2 L759.3,480.2 L766.5,483.3 L771.0,483.3 L780.0,488.3 L782.7,488.3 L790.4,493.7" stroke="#4646cc" stroke-width="1" fill="none" stroke-linejoin="round"/>
<path d="M451.2,452.2L455.6,454.8L451.2,457.40000000000003Z M794.5999999999999,452.2L790.5999999999999,454.8L794.5999999999999,457.40000000000003Z" fill="#1a1ac0"/>
<path d="M703.5,467.8L709.0999999999999,467.8L706.3,473.6Z" fill="none" stroke="#3c3ccc" stroke-width="1"/>
<text x="707.1999999999999" y="465.70000000000005" font-size="13" fill="#3c3ccc" stroke="#3c3ccc" stroke-width="0.3" text-anchor="middle" textLength="6.72" lengthAdjust="spacingAndGlyphs" >1</text>
<rect x="411.85" y="564.8" width="21" height="15.5" fill="#c8c8c8" />
<text x="422.35" y="577.0999999999999" font-size="13" fill="#222" stroke="#222" stroke-width="0.3" text-anchor="middle" textLength="6.72" lengthAdjust="spacingAndGlyphs" >4</text>
<text x="456.3" y="579.3" font-size="13" fill="#222" stroke="#222" stroke-width="0.3" textLength="31" lengthAdjust="spacingAndGlyphs" >&gt;Ch1:</text>
<text x="494.8" y="579.3" font-size="13" fill="#222" stroke="#222" stroke-width="0.3" textLength="26.4" lengthAdjust="spacingAndGlyphs" >Start</text>
<text x="531.8" y="579.3" font-size="13" fill="#222" stroke="#222" stroke-width="0.3" textLength="72.6" lengthAdjust="spacingAndGlyphs" >10.0000 MHz</text>
<rect x="607.8" y="573.3" width="8" height="2" fill="#2020d0" />
<text x="684.4000000000001" y="579.3" font-size="13" fill="#222" stroke="#222" stroke-width="0.3" textLength="25.4" lengthAdjust="spacingAndGlyphs" >Stop</text>
<text x="716.8" y="579.3" font-size="13" fill="#222" stroke="#222" stroke-width="0.3" textLength="74" lengthAdjust="spacingAndGlyphs" >42.0000 GHz</text>
<path d="M803.6,56.7 V33.7 a4,4 0 0 1 4,-4 H990 a4,4 0 0 1 4,4 V56.7 Z" fill="url(#ghd)"/>
<text x="812" y="49" font-size="13" fill="#fff" stroke="#fff" stroke-width="0.3" textLength="62.5" lengthAdjust="spacingAndGlyphs" >Save Recall</text>
<rect x="969" y="35" width="18" height="18" fill="url(#gcl)" rx="2.5" stroke="#a9b8cc" stroke-width="1" />
<path d="M974.4,40.3 L981.4,47.3 M981.4,40.3 L974.4,47.3" stroke="#fff" stroke-width="1.7" stroke-linecap="round"/>
<path d="M803.6,56.7 H993.3 V534.7 a4,4 0 0 1 -4,4 H807.6 a4,4 0 0 1 -4,-4 Z" fill="#3c3c3c"/>
<path d="M804.6,57.2 H922 V537.7 H807.6 a3,3 0 0 1 -3,-3 Z" fill="#7a7b8c"/>
<rect x="921.9" y="57.2" width="0.9" height="480.5" fill="#47473a" />
<rect x="922.8" y="57.2" width="69.7" height="46.6" fill="#5b5b5b" />
<path d="M922.8,105.2 H992.5 V150 H926.8 a4,4 0 0 1 -4,-4 Z" fill="#5b5b5b"/>
<rect x="922" y="150.8" width="70.5" height="47.5" fill="#7a7b8c" />
<path d="M922.8,203.3 a4,4 0 0 1 4,-4 H992.5 V533.7 a4,4 0 0 1 -4,4 H922.8 Z" fill="#5b5b5b"/>
<text x="958.5" y="86.5" font-size="13" fill="#ececec" stroke="#ececec" stroke-width="0.3" text-anchor="middle" textLength="31.4" lengthAdjust="spacingAndGlyphs" >Recall</text>
<text x="958.8" y="133.5" font-size="13" fill="#ececec" stroke="#ececec" stroke-width="0.3" text-anchor="middle" textLength="57.7" lengthAdjust="spacingAndGlyphs" >Save State</text>
<text x="958.3" y="180" font-size="13" fill="#f4f4f4" stroke="#f4f4f4" stroke-width="0.3" text-anchor="middle" textLength="59.5" lengthAdjust="spacingAndGlyphs" >Save Other</text>
<rect x="807.9" y="63.2" width="110.7" height="53.2" fill="url(#gbtn)" rx="4" stroke="#5f5f68" stroke-width="1.3" />
<text x="863.3" y="94.5" font-size="13" fill="#222" stroke="#222" stroke-width="0.3" text-anchor="middle" textLength="73.3" lengthAdjust="spacingAndGlyphs" >Save Calset...</text>
<rect x="807.9" y="122.5" width="110.7" height="53.2" fill="url(#gbtn)" rx="4" stroke="#5f5f68" stroke-width="1.3" />
<text x="863.3" y="153.8" font-size="13" fill="#222" stroke="#222" stroke-width="0.3" text-anchor="middle" textLength="66.5" lengthAdjust="spacingAndGlyphs" >Save Data...</text>
<rect x="807.9" y="181.8" width="110.7" height="53.2" fill="url(#gbtn)" rx="4" stroke="#5f5f68" stroke-width="1.3" />
<text x="863.3" y="213.10000000000002" font-size="13" fill="#222" stroke="#222" stroke-width="0.3" text-anchor="middle" textLength="78" lengthAdjust="spacingAndGlyphs" >Save Screen...</text>
<rect x="807.9" y="241.09999999999997" width="110.7" height="53.2" fill="url(#gbtn)" rx="4" stroke="#5f5f68" stroke-width="1.3" />
<text x="863.3" y="263.9" font-size="13" fill="#222" stroke="#222" stroke-width="0.3" text-anchor="middle" textLength="54" lengthAdjust="spacingAndGlyphs" >Save User</text>
<text x="863.3" y="279.9" font-size="13" fill="#222" stroke="#222" stroke-width="0.3" text-anchor="middle" textLength="45" lengthAdjust="spacingAndGlyphs" >Preset...</text>
<rect x="808.4" y="300.9" width="109.8" height="52.2" fill="url(#gin)" rx="4" stroke="#53546a" stroke-width="1.5" />
<rect x="807.9" y="359.7" width="110.7" height="53.2" fill="url(#gbtn)" rx="4" stroke="#5f5f68" stroke-width="1.3" />
<text x="863.3" y="391.0" font-size="13" fill="#222" stroke="#222" stroke-width="0.3" text-anchor="middle" textLength="83" lengthAdjust="spacingAndGlyphs" >Manage Files...</text>
<rect x="808.4" y="419.49999999999994" width="109.8" height="52.2" fill="url(#gin)" rx="4" stroke="#53546a" stroke-width="1.5" />
<rect x="808.4" y="478.79999999999995" width="109.8" height="52.2" fill="url(#gin)" rx="4" stroke="#53546a" stroke-width="1.5" />
<rect x="804.3" y="547" width="43.4" height="33" fill="url(#gtb)" rx="3" stroke="#4c4c4c" stroke-width="1" />
<polygon points="826.0,552.5 828.8,560.1 836.9,560.4 830.6,565.5 832.8,573.3 826.0,568.8 819.2,573.3 821.4,565.5 815.1,560.4 823.2,560.1" fill="#fff"/>
<rect x="4.5" y="587.5" width="39.5" height="16.0" fill="#dbdbdb" rx="3" stroke="#bcbcbc" stroke-width="1" />
<text x="15.5" y="599.5" font-size="11" fill="#333" stroke="#333" stroke-width="0.3" textLength="17.5" lengthAdjust="spacingAndGlyphs" >Tr 4</text>
<rect x="47" y="587.5" width="46" height="16.0" fill="#dbdbdb" rx="3" stroke="#bcbcbc" stroke-width="1" />
<text x="58.75" y="599.5" font-size="11" fill="#333" stroke="#333" stroke-width="0.3" textLength="22.5" lengthAdjust="spacingAndGlyphs" >Ch 1</text>
<rect x="96" y="587.5" width="53" height="16.0" fill="#dbdbdb" rx="3" stroke="#bcbcbc" stroke-width="1" />
<text x="107.5" y="599.5" font-size="11" fill="#333" stroke="#333" stroke-width="0.3" textLength="30.0" lengthAdjust="spacingAndGlyphs" >IntTrig</text>
<rect x="152.5" y="587.5" width="45.5" height="16.0" fill="#dbdbdb" rx="3" stroke="#bcbcbc" stroke-width="1" />
<text x="163.75" y="599.5" font-size="11" fill="#333" stroke="#333" stroke-width="0.3" textLength="27.25" lengthAdjust="spacingAndGlyphs" >Swp *</text>
<rect x="201" y="587.5" width="56" height="16.0" fill="#dbdbdb" rx="3" stroke="#bcbcbc" stroke-width="1" />
<text x="205.5" y="599.5" font-size="11" fill="#333" stroke="#333" stroke-width="0.3" textLength="47.0" lengthAdjust="spacingAndGlyphs" >BW=100k</text>
<rect x="260" y="587.5" width="63.69999999999999" height="16.0" fill="#dbdbdb" rx="3" stroke="#bcbcbc" stroke-width="1" />
<text x="270.5" y="599.5" font-size="11" fill="#333" stroke="#333" stroke-width="0.3" textLength="43.25" lengthAdjust="spacingAndGlyphs" >C  4-Port</text>
<rect x="327" y="587.5" width="50.5" height="16.0" fill="#dbdbdb" rx="3" stroke="#bcbcbc" stroke-width="1" />
<text x="337" y="599.5" font-size="11" fill="#b9b9b9" stroke="#b9b9b9" stroke-width="0.3" textLength="31" lengthAdjust="spacingAndGlyphs" >SrcCal</text>
<rect x="381" y="587.5" width="40" height="16.0" fill="#dbdbdb" rx="3" stroke="#bcbcbc" stroke-width="1" />
<text x="392" y="599.5" font-size="11" fill="#b9b9b9" stroke="#b9b9b9" stroke-width="0.3" textLength="18" lengthAdjust="spacingAndGlyphs" >Sim</text>
<rect x="424.5" y="587.5" width="45.5" height="16.0" fill="#dbdbdb" rx="3" stroke="#bcbcbc" stroke-width="1" />
<text x="434.5" y="599.5" font-size="11" fill="#b9b9b9" stroke="#b9b9b9" stroke-width="0.3" textLength="26.0" lengthAdjust="spacingAndGlyphs" >Pulse</text>
<rect x="473" y="587.5" width="523" height="16.0" fill="#dbdbdb" rx="3" stroke="#bcbcbc" stroke-width="1" />
<rect x="4.5" y="606.3" width="35.0" height="16.300000000000068" fill="#dbdbdb" rx="3" stroke="#bcbcbc" stroke-width="1" />
<text x="13" y="618.3" font-size="11" fill="#b9b9b9" stroke="#b9b9b9" stroke-width="0.3" textLength="18" lengthAdjust="spacingAndGlyphs" >Svc</text>
<rect x="42.5" y="606.3" width="46.2" height="16.300000000000068" fill="#dbdbdb" rx="3" stroke="#bcbcbc" stroke-width="1" />
<text x="51" y="618.3" font-size="11" fill="#333" stroke="#333" stroke-width="0.3" textLength="29" lengthAdjust="spacingAndGlyphs" >RFOn</text>
<rect x="91" y="606.3" width="55" height="16.300000000000068" fill="#dbdbdb" rx="3" stroke="#bcbcbc" stroke-width="1" />
<text x="94.5" y="618.3" font-size="11" fill="#333" stroke="#333" stroke-width="0.3" textLength="49.25" lengthAdjust="spacingAndGlyphs" >UpdateOn</text>
<rect x="149" y="606.3" width="46" height="16.300000000000068" fill="#dbdbdb" rx="3" stroke="#bcbcbc" stroke-width="1" />
<text x="158" y="618.3" font-size="11" fill="#333" stroke="#333" stroke-width="0.3" textLength="29" lengthAdjust="spacingAndGlyphs" >IntRef</text>
<rect x="197.5" y="606.3" width="666.5" height="16.300000000000068" fill="#dbdbdb" rx="3" stroke="#bcbcbc" stroke-width="1" />
<circle cx="212" cy="614.5" r="6" fill="#e03030" stroke="#f2b0b0" stroke-width="1"/><path d="M209.3,611.8 L214.7,617.2 M214.7,611.8 L209.3,617.2" stroke="#fff" stroke-width="1.8" stroke-linecap="round"/>
<text x="224.5" y="618.5" font-size="11" fill="#333" stroke="#333" stroke-width="0.3" textLength="596.5" lengthAdjust="spacingAndGlyphs" xml:space="preserve">Electronic Cal:  Unable to orient ECal module. Please ensure the module is connected to the necessary measurement ports.</text>
<rect x="867" y="606.3" width="35.5" height="16.300000000000068" fill="#dbdbdb" rx="3" stroke="#bcbcbc" stroke-width="1" />
<text x="875" y="618.3" font-size="11" fill="#333" stroke="#333" stroke-width="0.3" textLength="19.5" lengthAdjust="spacingAndGlyphs" >LCL</text>
<rect x="905.5" y="606.3" width="90.5" height="16.300000000000068" fill="#dbdbdb" rx="3" stroke="#bcbcbc" stroke-width="1" />
<text x="914.5" y="617.8" font-size="9.8" fill="#333" stroke="#333" stroke-width="0.3" textLength="73" lengthAdjust="spacingAndGlyphs" >2024/07/08-14:05</text>
</svg>
</body></html>
